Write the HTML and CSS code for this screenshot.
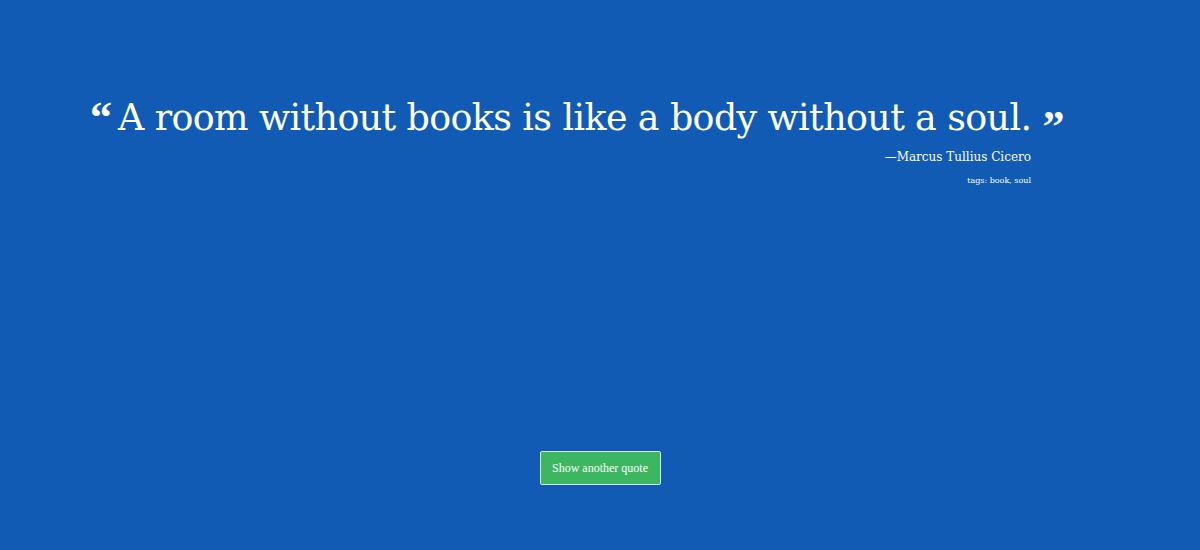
FILE: index.html
```html
<!DOCTYPE html>
<html>
<head>
<meta charset="utf-8">
<link rel="stylesheet" href="styles.css">
</head>
<body>
<main class="page">
  <section class="quote-box">
    <blockquote class="quote">
      <span class="mark open">&ldquo;</span><span class="text">A room without books is like a body without a soul.</span><span class="mark close">&rdquo;</span>
    </blockquote>
    <div class="author">&mdash;Marcus Tullius Cicero</div>
    <div class="tags">tags: book, soul</div>
  </section>
  <div class="actions">
    <button class="btn">Show another quote</button>
  </div>
</main>
</body>
</html>
```
FILE: styles.css
```css
html, body {
  margin: 0;
  padding: 0;
  height: 100%;
  background: #125bb4;
}
.page {
  height: 550px;
  display: flex;
  flex-direction: column;
  color: #fff;
  font-family: "DejaVu Serif", Georgia, serif;
}
.quote-box {
  width: 941px;
  margin: 90px 0 0 90px;
  display: flex;
  flex-direction: column;
}
.quote {
  margin: 0;
  display: flex;
  align-items: flex-start;
  white-space: nowrap;
}
.text {
  font-size: 36.4px;
  line-height: 56px;
  letter-spacing: -0.6px;
}
.mark {
  font-family: "Liberation Serif", "Times New Roman", serif;
  font-size: 44px;
  line-height: 44px;
  font-weight: bold;
}
.open { margin-right: 6px; margin-top: 6px; }
.close { margin-left: 11px; margin-top: 15px; }
.author {
  align-self: flex-end;
  font-size: 12px;
  margin-top: 1px;
}
.tags {
  align-self: flex-end;
  font-size: 8px;
  margin-top: 12px;
}
.actions {
  display: flex;
  justify-content: center;
  margin-top: 266px;
}
.btn {
  width: 121px;
  height: 34px;
  background: #3cb760;
  border: 1px solid #d8e6ee;
  border-radius: 2px;
  color: #fff;
  font-family: "Liberation Serif", "Times New Roman", serif;
  font-size: 12px;
  padding: 0;
}
```
